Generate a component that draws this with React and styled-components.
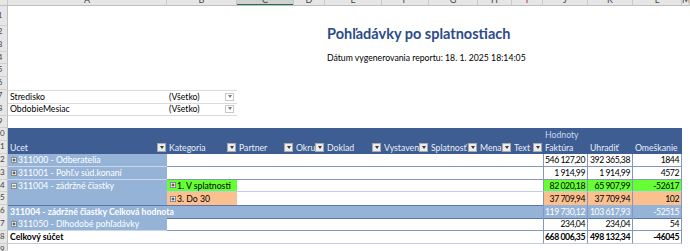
import React from 'react'
import styled, { createGlobalStyle } from 'styled-components'

const COLS = '8px 159px 70px 57px 31px 57px 47px 49px 34px 31px 45px 45px 49px 1fr'
const LETTERS = ['A', 'B', 'C', 'D', 'E', 'F', 'G', 'H', 'I', 'J', 'K', 'L', 'M']
const ROW_H = 12.8

const HEAD_BLUE = '#3d5d93'
const SOFT_BLUE = '#95b3d7'
const LINE = '#8497c0'
const LIGHT_LINE = '#c3cde2'
const A_LINE = '#c9d7ec'
const BAND_LINE = '#5a78ae'
const GREEN = '#66ff33'
const PEACH = '#fac090'

const GlobalStyle = createGlobalStyle`
  html, body { margin: 0; padding: 0; background: #fff; }
  body { font-family: Lato, "Liberation Sans", sans-serif; overflow: hidden; }
`

const Sheet = styled.div`
  width: 690px;
  height: 251px;
  overflow: hidden;
  background: #fff;
  font-size: 8.7px;
  color: #000;
`

const ColHeaderBar = styled.div`
  display: grid;
  grid-template-columns: ${COLS};
  height: 6px;
  box-sizing: border-box;
  background: #e6e6e6;
  border-bottom: 1px solid #bfbfbf;
`

const ColLetter = styled.div`
  overflow: hidden;
  border-right: 1px solid #c9c9c9;
  text-align: center;
  font-size: 9px;
  line-height: 9px;
  color: ${p => (p.$red ? '#b3262a' : '#444')};
  background: ${p => (p.$selected ? '#d2d2d2' : 'transparent')};
  box-shadow: ${p => (p.$selected ? 'inset 0 -1px 0 #217346' : 'none')};
  span { display: block; margin-top: -5px; }
`

const Row = styled.div`
  display: grid;
  grid-template-columns: ${COLS};
  height: ${p => p.$h || ROW_H}px;
  line-height: ${p => (p.$h || ROW_H) - 1}px;
`

const RowNum = styled.div`
  box-sizing: border-box;
  overflow: hidden;
  background: #e6e6e6;
  border-right: 1px solid #bfbfbf;
  border-bottom: 1px solid #d0d0d0;
  color: #444;
  font-size: 8px;
  span { display: block; width: 18px; margin-left: -9px; text-align: center; }
`

const Cell = styled.div`
  box-sizing: border-box;
  min-width: 0;
  display: flex;
  align-items: center;
  justify-content: ${p => (p.$right ? 'flex-end' : 'flex-start')};
  padding: 0 2px;
  white-space: nowrap;
  grid-column: ${p => (p.$span ? `span ${p.$span}` : 'auto')};
  background: ${p => p.$bg || 'transparent'};
  color: ${p => p.$color || '#000'};
  font-weight: ${p => (p.$bold ? 700 : 400)};
  border-top: ${p => (p.$bt ? `1px solid ${p.$bt}` : 'none')};
  border-bottom: ${p => (p.$bb ? `1px solid ${p.$bb}` : 'none')};
`

const Title = styled(Cell)`
  align-items: flex-end;
  font-size: 14.5px;
  font-weight: 700;
  color: #2e4b88;
  line-height: 15px;
  margin-bottom: 1px;
`

const HeadCell = styled(Cell)`
  background: ${HEAD_BLUE};
  color: #e9eff8;
  padding-right: 1px;
`

const HeadLabel = styled.span`
  flex: 1;
  min-width: 0;
  overflow: hidden;
`

const FilterBtn = styled.span`
  flex: none;
  width: 9px;
  height: 9px;
  box-sizing: border-box;
  border: 1px solid #a9a9a9;
  background: #ececec;
  display: flex;
  align-items: center;
  justify-content: center;
  &::after {
    content: '';
    border-left: 2.5px solid transparent;
    border-right: 2.5px solid transparent;
    border-top: 3px solid #3a3a3a;
  }
`

const ParamDrop = styled(FilterBtn)`
  margin-left: auto;
  margin-right: 1px;
  height: 8px;
  border-color: #c8c8c8;
  background: #fff;
  &::after { border-top-color: #7a7a7a; }
`

const Num = styled(Cell)`
  justify-content: flex-end;
  letter-spacing: -0.45px;
  border-right: 1px solid ${LINE};
  border-left: ${p => (p.$first ? `1px solid ${LINE}` : 'none')};
`

const ToggleIcon = ({ open }) => (
  <svg width="6" height="6" viewBox="0 0 6 6" style={{ flex: 'none', marginRight: 1, marginLeft: 1 }}>
    <rect x="0.5" y="0.5" width="5" height="5" fill="#f2f2f2" stroke="#8c8c8c" strokeWidth="1" />
    <line x1="1.5" y1="3" x2="4.5" y2="3" stroke="#333" strokeWidth="1" />
    {!open && <line x1="3" y1="1.5" x2="3" y2="4.5" stroke="#333" strokeWidth="1" />}
  </svg>
)

const Values = ({ vals, bg, color, bold, line }) =>
  vals.map((v, i) => (
    <Num key={i} $first={i === 0} $bg={bg} $color={color} $bold={bold} $bb={line}>
      {v}
    </Num>
  ))

const HEAD = ['Ucet', 'Kategoria', 'Partner', 'Okruh', 'Doklad', 'Vystavenie', 'Splatnosť', 'Mena', 'Text']

const Blank = ({ n }) => Array.from({ length: n }, (_, i) => <Cell key={i} />)

const App = () => {
  return (
    <Sheet>
      <GlobalStyle />
      <ColHeaderBar>
        <ColLetter />
        {LETTERS.map(l => (
          <ColLetter key={l} $selected={l === 'C'} $red={l === 'I'}>
            <span>{l}</span>
          </ColLetter>
        ))}
      </ColHeaderBar>

      <Row $h={20}><RowNum><span>1</span></RowNum></Row>
      <Row>
        <RowNum><span>2</span></RowNum>
        <Blank n={4} />
        <Title>Pohľadávky po splatnostiach</Title>
      </Row>
      <Row><RowNum><span>3</span></RowNum></Row>
      <Row>
        <RowNum><span>4</span></RowNum>
        <Blank n={4} />
        <Cell>Dátum vygenerovania reportu: 18. 1. 2025 18:14:05</Cell>
      </Row>
      <Row><RowNum><span>5</span></RowNum></Row>
      <Row><RowNum><span>6</span></RowNum></Row>
      <Row>
        <RowNum><span>7</span></RowNum>
        <Cell $bt="#dadada" $bb="#dadada">Stredisko</Cell>
        <Cell $bt="#dadada" $bb="#dadada">(Všetko)<ParamDrop /></Cell>
      </Row>
      <Row>
        <RowNum><span>8</span></RowNum>
        <Cell $bb="#dadada">ObdobieMesiac</Cell>
        <Cell $bb="#dadada">(Všetko)<ParamDrop /></Cell>
      </Row>
      <Row><RowNum><span>9</span></RowNum></Row>

      <Row>
        <RowNum><span>10</span></RowNum>
        <HeadCell $span={9} />
        <HeadCell style={{ color: '#c9d7ee' }}>Hodnoty</HeadCell>
        <HeadCell $span={2} />
      </Row>
      <Row>
        <RowNum><span>11</span></RowNum>
        {HEAD.map(h => (
          <HeadCell key={h}>
            <HeadLabel>{h}</HeadLabel>
            <FilterBtn />
          </HeadCell>
        ))}
        <HeadCell>Faktúra</HeadCell>
        <HeadCell>Uhradiť</HeadCell>
        <HeadCell>Omeškanie</HeadCell>
      </Row>

      <Row>
        <RowNum><span>12</span></RowNum>
        <Cell $bg={SOFT_BLUE} $color="#fff" $bb={A_LINE}><ToggleIcon />311000 - Odberatelia</Cell>
        <Cell $span={8} $bb={LINE} />
        <Values vals={['546 127,20', '392 365,38', '1844']} line={LINE} />
      </Row>
      <Row>
        <RowNum><span>13</span></RowNum>
        <Cell $bg={SOFT_BLUE} $color="#fff" $bb={A_LINE}><ToggleIcon />311001 - Pohľ.v súd.konaní</Cell>
        <Cell $span={8} $bb={LINE} />
        <Values vals={['1 914,99', '1 914,99', '4572']} line={LINE} />
      </Row>
      <Row>
        <RowNum><span>14</span></RowNum>
        <Cell $bg={SOFT_BLUE} $color="#fff"><ToggleIcon open />311004 - zádržné čiastky</Cell>
        <Cell $bg={GREEN} $bb={LIGHT_LINE}><ToggleIcon />1. V splatnosti</Cell>
        <Cell $span={7} $bb={LIGHT_LINE} />
        <Values vals={['82 020,18', '65 907,99', '-52617']} bg={GREEN} line={LIGHT_LINE} />
      </Row>
      <Row>
        <RowNum><span>15</span></RowNum>
        <Cell $bg={SOFT_BLUE} />
        <Cell $bg={PEACH}><ToggleIcon />3. Do 30</Cell>
        <Cell $span={7} />
        <Values vals={['37 709,94', '37 709,94', '102']} bg={PEACH} />
      </Row>
      <Row>
        <RowNum><span>16</span></RowNum>
        <Cell $span={9} $bg={SOFT_BLUE} $color="#fff" $bold $bt={BAND_LINE} $bb={BAND_LINE}>
          311004 - zádržné čiastky Celková hodnota
        </Cell>
        <Values vals={['119 730,12', '103 617,93', '-52515']} bg={SOFT_BLUE} color="#fff" line={BAND_LINE} />
      </Row>
      <Row>
        <RowNum><span>17</span></RowNum>
        <Cell $bg={SOFT_BLUE} $color="#fff" $bb={A_LINE}><ToggleIcon />311050 - Dlhodobé pohľadávky</Cell>
        <Cell $span={8} $bb={LINE} />
        <Values vals={['234,04', '234,04', '54']} line={LINE} />
      </Row>
      <Row>
        <RowNum><span>18</span></RowNum>
        <Cell $bold $bb="#c5cbd8">Celkový súčet</Cell>
        <Cell $span={8} $bb="#c5cbd8" />
        <Values vals={['668 006,35', '498 132,34', '-46045']} bold line="#c5cbd8" />
      </Row>
      <Row><RowNum><span>19</span></RowNum></Row>
    </Sheet>
  )
}

export default App
